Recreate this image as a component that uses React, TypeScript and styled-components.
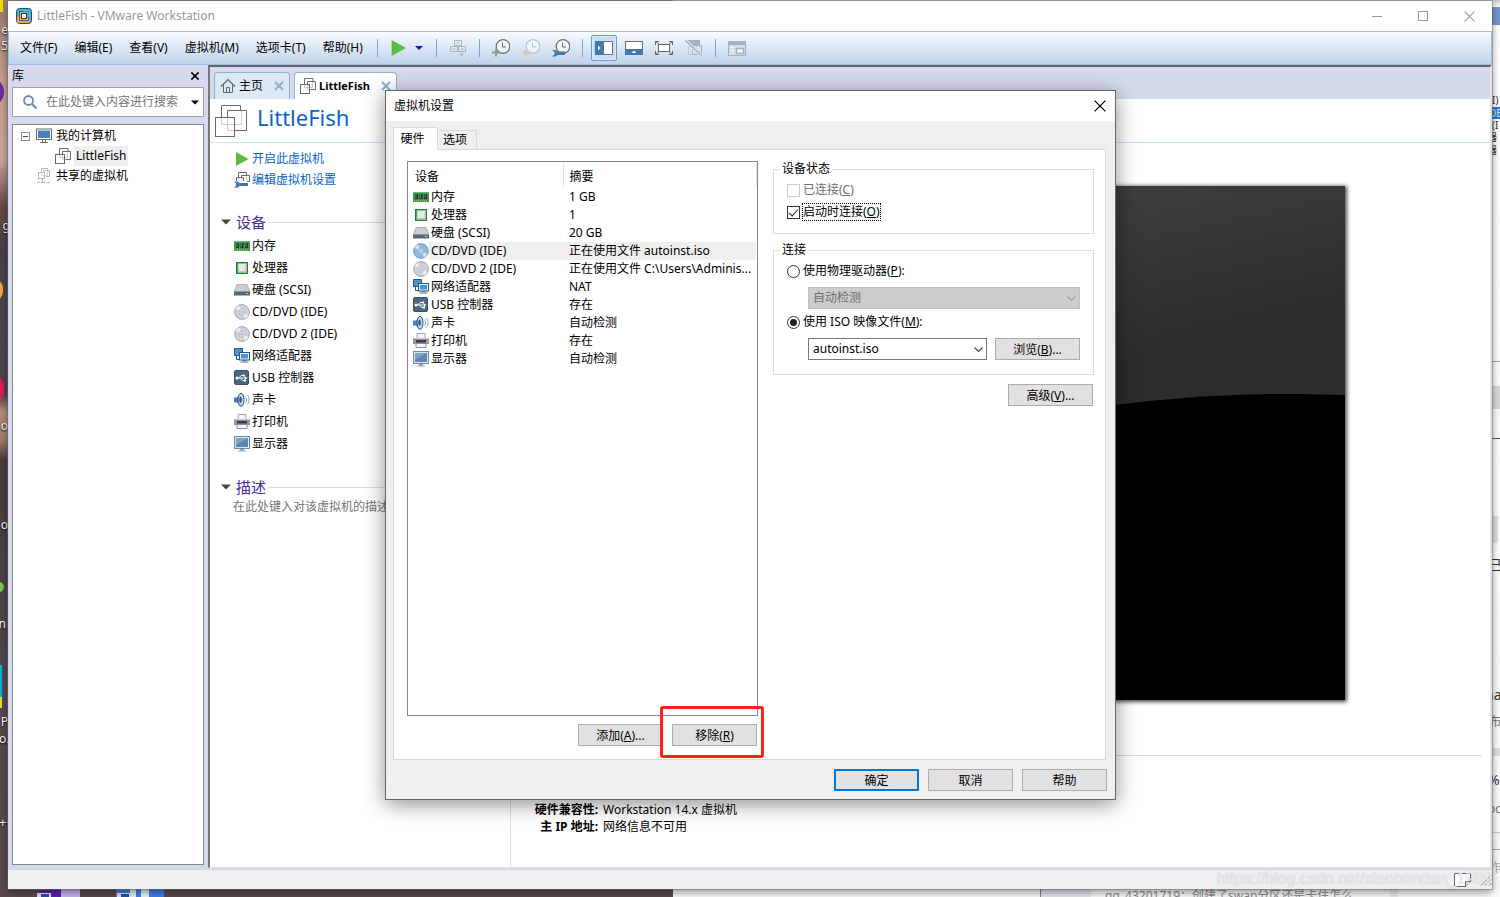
import React from "react";
import styled, { createGlobalStyle, css } from "styled-components";

const GlobalStyle = createGlobalStyle`
  *, *::before, *::after { box-sizing: border-box; }
  html, body { margin: 0; padding: 0; }
  body, button, input, select, textarea {
    font-family: "Noto Sans", "Noto Sans CJK SC", sans-serif;
    font-size: 12px;
    line-height: 16px;
    color: #000;
  }
  svg { display: block; flex: none; }
  h1, h2, ul, dl, dd, dt { margin: 0; padding: 0; font-weight: normal; }
  ul { list-style: none; }
  button { background: none; border: 0; padding: 0; white-space: nowrap; }
`;

/* ---------- desktop behind the windows ---------- */

const Desktop = styled.div`
  position: relative;
  display: flex;
  min-height: 100vh;
  padding: 1px 8px 8px;
  overflow: hidden;
  background: #f1f2f4;
`;

const Wallpaper = styled.div`
  position: absolute;
  left: 0;
  top: 0;
  bottom: 0;
  width: 673px;
  background: linear-gradient(180deg, #9c7a70 0, #c79c8c 80px, #c9a79c 160px, #6a4a45 205px, #4a3f48 250px, #4c454e 330px, #50424a 395px, #b98d78 412px, #a07c6a 440px, #493a3a 460px, #4b4148 560px, #564a4e 720px, #5b4a4c 100%);
`;

const BrowserEdge = styled.div`
  position: absolute;
  left: 673px;
  right: 0;
  top: 0;
  bottom: 0;
  background: linear-gradient(180deg, #c9c9c9 0, #fff 7px, #fafafa 100%);
`;

const Patch = styled.span<{ $x: number; $y: number; $w: number; $h: number; $c: string; $r?: number }>`
  position: absolute;
  left: ${(p) => p.$x}px;
  top: ${(p) => p.$y}px;
  width: ${(p) => p.$w}px;
  height: ${(p) => p.$h}px;
  background: ${(p) => p.$c};
  border-radius: ${(p) => p.$r ?? 0}px;
`;

const LeftLabel = styled.span<{ $y: number; $under?: number }>`
  position: absolute;
  right: calc(100% - 8px - ${(p) => p.$under ?? 0}px);
  top: ${(p) => p.$y}px;
  color: #fff;
  text-shadow: 0 1px 2px #000;
  white-space: nowrap;
`;

const RightLabel = styled.span<{ $y: number; $c?: string; $size?: number; $under?: number }>`
  position: absolute;
  left: calc(100% - 8px - ${(p) => p.$under ?? 0}px);
  top: ${(p) => p.$y}px;
  font-size: ${(p) => p.$size ?? 12}px;
  line-height: ${(p) => (p.$size === 10 ? 12 : 16)}px;
  color: ${(p) => p.$c ?? "#333"};
  white-space: nowrap;
`;

const Comment = styled.span`
  position: absolute;
  left: 1105px;
  bottom: -7px;
  color: #888;
  white-space: nowrap;
`;

const Watermark = styled.span`
  position: absolute;
  right: 8px;
  bottom: 8px;
  font-family: "Liberation Sans", sans-serif;
  font-size: 16px;
  line-height: 20px;
  color: rgba(250, 250, 250, 0.8);
  text-shadow: 0 0 1px rgba(120, 120, 120, 0.55);
  pointer-events: none;
`;

/* ---------- main window ---------- */

const Window = styled.div`
  position: relative;
  flex: 1;
  display: flex;
  flex-direction: column;
  min-width: 0;
  background: #efefef;
  box-shadow: 0 0 0 1px rgba(110, 110, 110, 0.5), 0 3px 8px rgba(0, 0, 0, 0.45);
`;

const TitleBar = styled.header`
  display: flex;
  align-items: center;
  height: 30px;
  padding-left: 8px;
  background: #fff;
  color: #999;
`;

const TitleText = styled.span`
  flex: 1;
  margin-left: 5px;
`;

const CaptionButton = styled.button`
  display: flex;
  align-items: center;
  justify-content: center;
  width: 46px;
  height: 28px;
`;

const ToolBar = styled.nav`
  display: flex;
  align-items: center;
  height: 34px;
  padding-left: 3px;
  background: linear-gradient(180deg, #f8fbff, #bfd3ea);
  border: 1px solid #9dbde2;
`;

const Menus = styled.div`
  display: flex;
  gap: 1px;
`;

const MenuButton = styled.button`
  height: 24px;
  padding: 0 8px;
`;

const Separator = styled.span`
  width: 1px;
  height: 18px;
  margin: 0 6px;
  background: #7ea3cf;
`;

const ToolButton = styled.button<{ $narrow?: boolean }>`
  display: flex;
  align-items: center;
  justify-content: ${(p) => (p.$narrow ? "flex-start" : "center")};
  width: ${(p) => (p.$narrow ? 16 : 30)}px;
  height: 26px;
`;

const PressedFrame = styled.span`
  display: flex;
  align-items: center;
  justify-content: center;
  width: 26px;
  height: 26px;
  background: #c7dcf8;
  border: 1px solid #6e9ad2;
  border-radius: 2px;
  box-shadow: inset 0 0 0 1px #dfeafa;
`;

const Workspace = styled.div`
  flex: 1;
  display: flex;
  min-height: 0;
  background: #d5daed;
`;

const Sidebar = styled.aside`
  display: flex;
  flex-direction: column;
  width: 200px;
  flex: none;
  padding: 0 4px 4px;
`;

const SidebarHead = styled.div`
  display: flex;
  align-items: center;
  justify-content: space-between;
  height: 22px;
  padding-right: 5px;
`;

const SearchBox = styled.label`
  display: flex;
  align-items: center;
  height: 30px;
  padding: 0 4px 0 10px;
  background: #fff;
  border: 1px solid #a0a0a0;
`;

const SearchInput = styled.input`
  flex: 1;
  min-width: 0;
  margin-left: 9px;
  padding: 0;
  border: 0;
  outline: 0;
  &::placeholder { color: #757575; opacity: 1; }
`;

const Tree = styled.ul`
  flex: 1;
  margin-top: 7px;
  padding: 1px 8px;
  background: #fff;
  border: 1px solid #828790;
`;

const TreeItem = styled.li<{ $indent: number }>`
  display: flex;
  align-items: center;
  gap: 4px;
  height: 20px;
  padding-left: ${(p) => p.$indent}px;
`;

const TreeLabel = styled.button<{ $selected?: boolean }>`
  height: 20px;
  ${(p) => p.$selected && css`
    margin-left: -1px;
    padding: 0 2px;
    background: #efefef;
  `}
`;

const Expander = styled.span`
  display: flex;
  margin-right: 2px;
`;

const Main = styled.main`
  flex: 1;
  display: flex;
  flex-direction: column;
  min-width: 0;
  background: #fff;
  border: solid;
  border-width: 2px 2px 1px 2px;
  border-color: #666 #e3e3e3 #e3e3e3 #777;
  margin-bottom: 1px;
`;

const TabStrip = styled.div`
  display: flex;
  align-items: flex-end;
  gap: 4px;
  height: 32px;
  padding-left: 4px;
  background: #d5daed;
`;

const Tab = styled.div<{ $active?: boolean }>`
  display: flex;
  align-items: center;
  gap: 3px;
  height: 27px;
  padding: 0 5px;
  background: ${(p) => (p.$active ? "#fff" : "#dbe8f5")};
  border: 1px solid #8fafd0;
  border-bottom: 0;
  border-radius: 4px 4px 0 0;
`;

const TabLabel = styled.button<{ $bold?: boolean }>`
  margin-right: 8px;
  ${(p) => p.$bold && css`
    font-size: 11px;
    font-weight: 700;
  `}
`;

const VmHeader = styled.div`
  display: flex;
  align-items: center;
  gap: 10px;
  height: 44px;
  padding-left: 5px;
  border-bottom: 1px solid #cfe1f1;
`;

const VmName = styled.h1`
  padding-bottom: 8px;
  font-size: 22px;
  line-height: 30px;
  color: #0a64c8;
`;

const VmBody = styled.div`
  flex: 1;
  display: flex;
`;

const VmLeft = styled.div`
  width: 301px;
  flex: none;
  padding: 5px 9px 0 11px;
  border-right: 1px solid #cfe1f1;
`;

const CommandList = styled.ul`
  padding-left: 13px;
`;

const Command = styled.a`
  display: flex;
  align-items: center;
  gap: 2px;
  height: 21px;
  color: #0a64c8;
  text-decoration: none;
`;

const SectionHead = styled.h2`
  display: flex;
  align-items: center;
  margin-top: 20px;
  height: 24px;
  font-size: 15px;
  line-height: 24px;
  color: #4a2ea6;
  svg { margin-right: 5px; }
  &::after {
    content: "";
    flex: 1;
    height: 1px;
    margin-left: 2px;
    background: #dcdcdc;
  }
`;

const DeviceList = styled.ul`
  padding-top: 1px;
`;

const DeviceItem = styled.li`
  display: flex;
  align-items: center;
  height: 22px;
  padding-left: 13px;
  button { display: flex; align-items: center; gap: 2px; }
`;

const Note = styled.p`
  margin: 0;
  padding-left: 12px;
  color: #757575;
  white-space: nowrap;
`;

const VmRight = styled.div`
  flex: 1;
  min-width: 0;
  padding: 43px 8px 0;
`;

const Preview = styled.div`
  width: 688px;
  max-width: 100%;
  margin: 0 auto;
  background: #000;
  box-shadow: 1px 1px 4px 1px rgba(0, 0, 0, 0.7);
  svg { width: 100%; height: auto; }
`;

const Details = styled.dl`
  display: grid;
  grid-template-columns: 79px 1fr;
  column-gap: 5px;
  margin-top: 55px;
  padding-top: 45px;
  border-top: 1px solid #dcdcdc;
  line-height: 17px;
  dt { font-weight: 700; text-align: right; white-space: nowrap; }
`;

const StatusBar = styled.footer`
  display: flex;
  align-items: center;
  justify-content: flex-end;
  gap: 9px;
  height: 20px;
  background: #efefef;
  border-top: 1px solid #d8d8d8;
`;

/* ---------- settings dialog ---------- */

const Dialog = styled.section`
  position: absolute;
  left: 385px;
  top: 90px;
  width: 731px;
  padding: 0 8px 8px 7px;
  background: #efefef;
  border: 1px solid #666;
  box-shadow: 0 4px 20px rgba(0, 0, 0, 0.45);
`;

const DialogTitle = styled.header`
  display: flex;
  align-items: center;
  justify-content: space-between;
  height: 30px;
  margin: 0 -8px 0 -7px;
  padding: 0 9px 0 8px;
  background: #fff;
`;

const DialogTabs = styled.div`
  display: flex;
  align-items: flex-end;
  height: 29px;
  margin-bottom: -1px;
`;

const DialogTab = styled.button<{ $active?: boolean }>`
  position: relative;
  width: ${(p) => (p.$active ? 45 : 39)}px;
  height: ${(p) => (p.$active ? 23 : 20)}px;
  padding-right: ${(p) => (p.$active ? 6 : 4)}px;
  background: ${(p) => (p.$active ? "#fff" : "#efefef")};
  border: 1px solid #d9d9d9;
  border-left-width: ${(p) => (p.$active ? 1 : 0)}px;
  border-bottom-color: ${(p) => (p.$active ? "#fff" : "#d9d9d9")};
`;

const Pane = styled.div`
  display: flex;
  gap: 15px;
  margin-right: 1px;
  padding: 11px 11px 13px 13px;
  background: #fff;
  border: 1px solid #d9d9d9;
`;

const HardwareColumn = styled.div`
  width: 351px;
  flex: none;
`;

const HardwareBox = styled.div`
  min-height: 555px;
  border: 1px solid #828790;
  padding: 1px;
`;

const HardwareTable = styled.table`
  width: 100%;
  border-collapse: collapse;
  table-layout: fixed;
  th {
    height: 25px;
    padding: 2px 0 0 6px;
    font-weight: 400;
    text-align: left;
    border-right: 1px solid #e5e5e5;
  }
  td {
    height: 18px;
    padding: 0 2px 0 6px;
    line-height: 18px;
    white-space: nowrap;
    overflow: hidden;
    text-overflow: ellipsis;
  }
  td:first-child { padding: 0 0 0 4px; }
`;

const HardwareRow = styled.tr<{ $selected?: boolean }>`
  ${(p) => p.$selected && css`
    td { background: #efefef; }
    td:first-child { background: linear-gradient(90deg, #fff 20px, #efefef 20px); }
  `}
`;

const DeviceCell = styled.span`
  display: flex;
  align-items: center;
  gap: 2px;
`;

const ButtonRow = styled.div<{ $top: number; $inset?: boolean }>`
  display: flex;
  justify-content: flex-end;
  gap: 9px;
  margin-top: ${(p) => p.$top}px;
  padding-right: ${(p) => (p.$inset ? 1 : 0)}px;
`;

const PushButton = styled.button<{ $primary?: boolean }>`
  width: 85px;
  height: 22px;
  padding-top: 2px;
  background: #e1e1e1;
  border: ${(p) => (p.$primary ? "2px solid #0078d7" : "1px solid #adadad")};
`;

const Highlighted = styled.span`
  position: relative;
  display: flex;
  &::after {
    content: "";
    position: absolute;
    inset: -18px -7px -12px -12px;
    border: 3px solid #ff2212;
    border-radius: 3px;
    pointer-events: none;
  }
`;

const SettingsColumn = styled.div`
  flex: 1;
  min-width: 0;
`;

const Group = styled.fieldset<{ $gap?: number; $bottom: number }>`
  min-width: 0;
  margin: ${(p) => p.$gap ?? 0}px 0 0;
  padding: 2px 13px ${(p) => p.$bottom}px;
  border: 1px solid #dcdcdc;
  legend { margin-left: -7px; padding: 0 2px; line-height: 16px; }
`;

const Option = styled.label<{ $disabled?: boolean }>`
  display: flex;
  align-items: center;
  gap: 3px;
  height: 22px;
  color: ${(p) => (p.$disabled ? "#6d6d6d" : "#000")};
`;

const Check = styled.input`
  appearance: none;
  position: relative;
  flex: none;
  width: 13px;
  height: 13px;
  margin: 0;
  background: #fff;
  border: 1px solid #333;
  &:disabled { border-color: #ccc; }
  &:checked::before {
    content: "";
    position: absolute;
    left: 3px;
    top: 0;
    width: 5px;
    height: 9px;
    border: solid #222;
    border-width: 0 1px 1px 0;
    transform: rotate(42deg);
  }
`;

const Radio = styled.input`
  appearance: none;
  display: flex;
  align-items: center;
  justify-content: center;
  flex: none;
  width: 13px;
  height: 13px;
  margin: 0;
  background: #fff;
  border: 1px solid #333;
  border-radius: 50%;
  &:checked::before {
    content: "";
    width: 7px;
    height: 7px;
    border-radius: 50%;
    background: #222;
  }
`;

const FocusText = styled.span`
  outline: 1px dotted #000;
`;

const FieldRow = styled.div`
  display: flex;
  align-items: center;
  gap: 8px;
  margin: 5px 0 2px;
  padding-left: 21px;
`;

const SelectWrap = styled.span`
  position: relative;
  display: flex;
  flex: 1;
  svg { position: absolute; right: 4px; top: 9px; pointer-events: none; }
`;

const Select = styled.select`
  appearance: none;
  width: 100%;
  height: 22px;
  padding: 0 16px 0 4px;
  background: #fff;
  border: 1px solid #7a7a7a;
  border-radius: 0;
  &:disabled { background: #ccc; border-color: #bfbfbf; color: #6d6d6d; opacity: 1; }
`;

/* ---------- icons ---------- */

const S = ({ w = 16, h = 16, vb, children }: { w?: number; h?: number; vb?: string; children: React.ReactNode }) => (
  <svg width={w} height={h} viewBox={vb ?? `0 0 ${w} ${h}`} fill="none" aria-hidden="true">{children}</svg>
);

const LogoIcon = () => (
  <S>
    <rect x=".5" y=".5" width="15" height="15" rx="3" fill="#46b4d6" stroke="#1f4d5e" />
    <path d="M1 8v4.500A2.500 2.500 0 0 0 3.500 15h8a2.500 2.500 0 0 0 2.500-2.500V11H4.500V8z" fill="#f3a72e" />
    <path d="M3.500 12.500v-9h9v9z" fill="#f5b845" stroke="#1f4d5e" strokeWidth=".8" />
    <path d="M7 4h5v5" stroke="#46b4d6" strokeWidth="1.600" />
    <rect x="5.500" y="5.500" width="5" height="5" fill="#fff" stroke="#1c3f50" />
  </S>
);

const Play = ({ w = 14, h = 14 }: { w?: number; h?: number }) => (
  <S w={w} h={h} vb="0 0 14 14"><path d="M1 0l12.500 7L1 14z" fill="#5dbb3f" /></S>
);

const VmIconLarge = () => (
  <S w={32} h={32}>
    <path d="M12.500 5.500v20h7v-13M6.500 12.500v7h20v-14" stroke="#c2ccdf" />
    <path d="M6.500 12.500V.5h19v5M12.500 12.500v-7h19v20h-12" stroke="#6b6b6b" />
    <rect x=".5" y="12.500" width="19" height="19" stroke="#6b6b6b" />
  </S>
);

const VmIcon = () => (
  <S>
    <path d="M7.500 6v5.500h3M4.500 6v3.500h8v-6" stroke="#c2ccdf" />
    <path d="M4.500 6V.5h8.500V3M7.500 6V3.500h8v8h-5" stroke="#6b6b6b" />
    <rect x=".5" y="6.500" width="9" height="9" stroke="#6b6b6b" />
  </S>
);

const SharedVmIcon = () => (
  <S>
    <path d="M5.500 4V.5h6V2M7.500 4V2.500h6v6h-4" stroke="#b8b8b8" />
    <rect x="2.500" y="4.500" width="6" height="6" stroke="#b8b8b8" />
    <path d="M5.500 4.500v3h6v-5" stroke="#d4d8e0" />
    <path d="M6.500 11v3M1 14.500h3M5 14.500h4M11 14.500h3" stroke="#b8b8b8" />
  </S>
);

const ComputerIcon = () => (
  <S>
    <rect x=".5" y="1" width="15" height="10.500" fill="#4a7fb5" stroke="#6b6b6b" />
    <rect x="1.500" y="2" width="13" height="8.500" stroke="#fff" />
    <path d="M6.500 12v2M9.500 12v2M4 14.500h8" stroke="#6b6b6b" />
  </S>
);

const HomeIcon = () => (
  <S>
    <path d="M1 8.500L8 1.500l7 7" stroke="#666" strokeWidth="1.200" />
    <path d="M3.500 7v7.500h9V7M6.500 14V9.500h3V14" stroke="#666" />
  </S>
);

const TabClose = () => (
  <S w={10} h={10}><path d="M1 1l8 8M9 1L1 9" stroke="#8db0cf" strokeWidth="2" /></S>
);

const Cross = ({ size = 10, color = "#000", weight = 1 }: { size?: number; color?: string; weight?: number }) => (
  <S w={size} h={size} vb="0 0 10 10"><path d="M.5.5l9 9M9.500.5l-9 9" stroke={color} strokeWidth={weight} /></S>
);

const SettingsVmIcon = () => (
  <S>
    <path d="M7.500 8V3.500h5v5M4.500 6v2" stroke="#c2ccdf" />
    <path d="M4.500 5V.5h8V3M7.500 5V3.500h8v6H13M2.500 9V5.500h7V9" stroke="#6b6b6b" />
    <path d="M0 9.500h4l1.500 1.500H14v3H5.500L4 15.500H0l2-2v-2.500z" fill="#4377b0" />
  </S>
);

const Clock = ({ tone = "#6b6b6b" }: { tone?: string }) => (
  <>
    <circle cx="11" cy="7.500" r="6.800" fill="#fff" fillOpacity=".5" stroke={tone} strokeWidth="1.200" />
    <path d="M10.500 3.500V8H14" stroke={tone} />
  </>
);

const SnapshotAdd = () => (
  <S w={18} h={18}><Clock /><path d="M4 9.500v8M0 13.500h8" stroke="#7fa68d" strokeWidth="2" /></S>
);
const SnapshotBack = () => (
  <S w={18} h={18}><Clock tone="#b9c1cc" /><path d="M0 14l4.500-4v2.500H9v3H4.500V18z" fill="#dcc6ae" /></S>
);
const SnapshotManage = () => (
  <S w={18} h={18}>
    <Clock />
    <path d="M0 11h4l1.500 1.500H13v3.500H5.500L4 17.500H0L2.500 15.500v-2.500z" fill="#4377b0" />
  </S>
);
const SendKeys = () => (
  <S w={18} h={18}>
    <path d="M5.500 1.500h7v5h-7zM1.500 7.500h7v5h-7zM9.500 7.500h7v5h-7zM3.500 10h3M11.500 10h3M7.500 4h3M12.500 12v5M10 14.500l2.500 2.500 2.500-2.500" stroke="#a9b4c3" />
  </S>
);
const LibraryView = () => (
  <S w={18} h={14}>
    <rect width="18" height="14" fill="#4377b0" />
    <path d="M8.500 .5h9v13h-9z" fill="#fff" stroke="#6b7480" />
    <path d="M3 4.500L5.500 7 3 9.500z" fill="#fff" />
  </S>
);
const ThumbView = () => (
  <S w={18} h={14}>
    <rect x=".5" y=".5" width="17" height="13" fill="#fff" stroke="#6b6b6b" />
    <rect y="8" width="18" height="6" fill="#4377b0" />
    <path d="M6.500 12L9 9.500l2.500 2.500z" fill="#fff" />
  </S>
);
const FullScreen = () => (
  <S w={18} h={14}>
    <rect x="3.500" y="3.500" width="11" height="7" fill="#fff" stroke="#666" />
    <path d="M.5 4V.5H4M.5.5L4 3.500M14 .5h3.500V4M17.500.5L14 3.500M.5 10v3.500H4M.5 13.500L4 10.500M17.500 10v3.500H14M17.500 13.500L14 10.500" stroke="#666" />
  </S>
);
const Unity = () => (
  <S w={18} h={16}>
    <path d="M3 0h12v5H3z" fill="#a6b1bf" />
    <path d="M14.500 4v6H12" stroke="#a6b1bf" />
    <path d="M3.500 6.500h7v8h-7z" stroke="#c0c9d5" />
    <path d="M7.500 5.500h9v9h-9z" fill="#d3dfee" stroke="#a6b1bf" />
    <path d="M.5.5l16 15" stroke="#dbe6f3" strokeWidth="3.500" />
    <path d="M.5.5l16 15" stroke="#a6b1bf" strokeWidth="1.500" />
  </S>
);
const Console = () => (
  <S w={18} h={15}>
    <rect x=".5" y=".5" width="17" height="14" fill="#d6dee9" stroke="#a6b1bf" />
    <path d="M0 0h18v4H0z" fill="#a6b1bf" />
    <path d="M3 6.500h3M3 9.500h3" stroke="#fff" />
    <rect x="8.500" y="7.500" width="7" height="5" fill="#eef3fa" stroke="#a6b1bf" strokeWidth="1.500" />
  </S>
);

const Triangle = () => <S w={10} h={6}><path d="M0 .5h10L5 5.500z" fill="#444" /></S>;

const Chevron = ({ color }: { color: string }) => (
  <S w={9} h={6}><path d="M.5.5l4 4 4-4" stroke={color} strokeWidth="1.100" /></S>
);

const MemoryIcon = () => (
  <S>
    <path d="M0 3h16v10H0z" fill="#3c9a50" />
    <path d="M0 3h16v1H0z" fill="#63bd74" />
    <path d="M2 5h3v5H2zM6.500 5h3v5h-3zM11 5h3v5h-3z" fill="#26332a" />
    <path d="M3 5v4M7.500 5v4M12 5v4" stroke="#70796f" />
    <path d="M1 12h14" stroke="#d8c25a" strokeDasharray="1 1" />
  </S>
);
const CpuIcon = () => (
  <S>
    <rect x="2" y="2" width="12" height="12" fill="#23803c" />
    <rect x="4" y="3.500" width="8.500" height="9" fill="#e6eae4" stroke="#8fc49b" />
    <path d="M5 11.500h7v-7" stroke="#b9c0b8" />
  </S>
);
const DiskIcon = () => (
  <S>
    <path d="M3 2.500h10l3 7.500H0z" fill="#c9ced4" stroke="#8b929a" strokeWidth=".6" />
    <path d="M0 9.500h16v4H0z" fill="#5d6770" />
    <path d="M0 9.500h16" stroke="#8b949c" />
    <path d="M12 11.500h2" stroke="#a6e08a" />
  </S>
);
const DiscIcon = ({ selected }: { selected?: boolean }) => (
  <S>
    <circle cx="8" cy="8" r="7.400" fill={selected ? "#8db9e2" : "#cdd2d9"} stroke={selected ? "#5d8fc2" : "#9298a3"} strokeWidth=".8" />
    <path d="M8 8L1.500 5A7 7 0 0 1 5 1.600zM8 8l6.500 3a7 7 0 0 1-3.500 3.400z" fill="#fff" opacity=".65" />
    <circle cx="8" cy="8" r="3" fill={selected ? "#c4dcf2" : "#e6e9ee"} stroke={selected ? "#6b9bcc" : "#a5abb6"} strokeWidth=".6" />
    <circle cx="8" cy="8" r="1.200" fill="#fff" stroke="#777f8c" strokeWidth=".6" />
  </S>
);
const NetworkIcon = () => (
  <S>
    <path d="M.5 .5h8v7h-8z" fill="#4c93cf" stroke="#2a5580" />
    <path d="M2.500 7.500v4h3" stroke="#2a5580" />
    <rect x="5.500" y="4.500" width="10" height="7.500" fill="#e8f1f9" stroke="#2a5580" />
    <rect x="7" y="6" width="7" height="4.500" fill="#3d97e0" />
    <path d="M8.500 12.500h4M6.500 14h8" stroke="#5b6f83" />
  </S>
);
const UsbIcon = () => (
  <S>
    <rect x=".5" y=".5" width="14" height="14" rx="1.500" fill="#4b6681" stroke="#37506a" />
    <path d="M2.500 8H12M5 8l2-2.500h2M6.500 8l2 2.500h2" stroke="#fff" />
    <circle cx="3" cy="8" r="1.500" fill="#fff" />
    <path d="M11 6.500L13.500 8 11 9.500zM9 4.500h2v2H9zM10 9.500h2v2h-2z" fill="#fff" />
  </S>
);
const SoundIcon = () => (
  <S>
    <path d="M0 5.500h3L7.500 1v13.500L3 10.500H0z" fill="#4b7db0" />
    <ellipse cx="7" cy="7.800" rx="3" ry="6.500" fill="#b9d2ea" stroke="#2d5684" />
    <ellipse cx="6.500" cy="7.800" rx="1.300" ry="3" fill="#2d5684" />
    <path d="M11.500 4.500c1.500 2 1.500 4.500 0 6.500M13.500 3c2 3 2 6.500 0 9.500" stroke="#8aa8c6" />
  </S>
);
const PrinterIcon = () => (
  <S>
    <path d="M4 .5h8V6H4z" fill="#f4f5fa" stroke="#a0a3b5" />
    <path d="M0 5.500h16V11H0z" fill="#9494aa" />
    <path d="M3 7h10v2.500H3z" fill="#3b3b49" />
    <path d="M0 5.500h16" stroke="#c4c4d4" />
    <path d="M14 8.500h1" stroke="#7ee06a" />
    <path d="M3 10.500h10v4H3z" fill="#f4f5fa" stroke="#8c8ca0" />
  </S>
);
const DisplayIcon = () => (
  <S>
    <rect x=".5" y=".5" width="15" height="12" fill="#dde6ef" stroke="#7488a0" />
    <rect x="2" y="2" width="12" height="9" fill="#5d86b2" />
    <path d="M2 2h12L2 9z" fill="#7ea2c8" />
    <path d="M6 13h4v1.500H6z" fill="#8a9bb0" />
    <path d="M4 15h8" stroke="#8a9bb0" />
  </S>
);

/* ---------- data ---------- */

interface Device {
  name: string;
  summary: string;
  icon: React.ReactNode;
  selected?: boolean;
}

const devices: Device[] = [
  { name: "内存", summary: "1 GB", icon: <MemoryIcon /> },
  { name: "处理器", summary: "1", icon: <CpuIcon /> },
  { name: "硬盘 (SCSI)", summary: "20 GB", icon: <DiskIcon /> },
  { name: "CD/DVD (IDE)", summary: "正在使用文件 autoinst.iso", icon: <DiscIcon />, selected: true },
  { name: "CD/DVD 2 (IDE)", summary: "正在使用文件 C:\\Users\\Adminis...", icon: <DiscIcon /> },
  { name: "网络适配器", summary: "NAT", icon: <NetworkIcon /> },
  { name: "USB 控制器", summary: "存在", icon: <UsbIcon /> },
  { name: "声卡", summary: "自动检测", icon: <SoundIcon /> },
  { name: "打印机", summary: "存在", icon: <PrinterIcon /> },
  { name: "显示器", summary: "自动检测", icon: <DisplayIcon /> },
];

const menus = ["文件(F)", "编辑(E)", "查看(V)", "虚拟机(M)", "选项卡(T)", "帮助(H)"];

/* ---------- parts ---------- */

const Backdrop = () => (
  <>
    <Wallpaper aria-hidden="true">
      <Patch $x={-8} $y={0} $w={11} $h={12} $c="#e8e000" />
      <Patch $x={-34} $y={77} $w={38} $h={30} $c="#6a2c9a" $r={16} />
      <Patch $x={-18} $y={278} $w={21} $h={24} $c="#f6a63c" $r={12} />
      <Patch $x={-22} $y={374} $w={26} $h={30} $c="#dc1c5c" $r={14} />
      <Patch $x={-6} $y={582} $w={10} $h={10} $c="#78c850" $r={5} />
      <Patch $x={0} $y={665} $w={2} $h={32} $c="#00b4dc" />
      <Patch $x={0} $y={697} $w={2} $h={11} $c="#e6dc30" />
      <Patch $x={39} $y={889} $w={22} $h={8} $c="#5a22b4" />
      <Patch $x={61} $y={889} $w={19} $h={8} $c="#c4b4ec" />
      <Patch $x={116} $y={889} $w={48} $h={8} $c="#3f7fe8" />
      <Patch $x={130} $y={889} $w={6} $h={8} $c="#e8f0fa" />
      <Patch $x={141} $y={889} $w={8} $h={8} $c="#e8f0fa" />
      <Patch $x={37} $y={893} $w={14} $h={4} $c="#dfe4f4" />
      <Patch $x={41} $y={894} $w={8} $h={3} $c="#2a4f9a" />
      <Patch $x={117} $y={893} $w={14} $h={4} $c="#dfe4f4" />
      <Patch $x={121} $y={894} $w={8} $h={3} $c="#2a4f9a" />
    </Wallpaper>
    <BrowserEdge aria-hidden="true">
      <Patch $x={367} $y={889} $w={1} $h={8} $c="#888" />
      <Patch $x={368} $y={889} $w={50} $h={8} $c="#e4e7ea" />
      <Patch $x={717} $y={889} $w={8} $h={8} $c="#e9ebee" />
      <Patch $x={819} $y={7} $w={8} $h={18} $c="#6f98cc" />
      <Patch $x={819} $y={107} $w={8} $h={12} $c="#2f78c8" />
      <Patch $x={819} $y={361} $w={8} $h={1} $c="#aaa" />
      <Patch $x={819} $y={386} $w={8} $h={23} $c="#dadada" />
      <Patch $x={819} $y={438} $w={8} $h={1} $c="#555" />
      <Patch $x={819} $y={516} $w={6} $h={27} $c="#dfe1e4" />
      <Patch $x={819} $y={748} $w={8} $h={8} $c="#dfe1e4" />
      <Patch $x={819} $y={832} $w={8} $h={1} $c="#ccc" />
      <Patch $x={819} $y={849} $w={8} $h={1} $c="#aaa" />
    </BrowserEdge>
    <LeftLabel $y={22}>e</LeftLabel>
    <LeftLabel $y={38}>5</LeftLabel>
    <LeftLabel $y={218} $under={2}>g</LeftLabel>
    <LeftLabel $y={418}>o</LeftLabel>
    <LeftLabel $y={517}>o</LeftLabel>
    <LeftLabel $y={616} $under={-2}>n</LeftLabel>
    <LeftLabel $y={714}>P</LeftLabel>
    <LeftLabel $y={731} $under={8}>o...</LeftLabel>
    <LeftLabel $y={815} $under={5}>++</LeftLabel>
    <RightLabel $y={94} $size={10}>I)</RightLabel>
    <RightLabel $y={107} $size={10} $c="#cfeaff" $under={3}>DE</RightLabel>
    <RightLabel $y={119} $size={10}>(I</RightLabel>
    <RightLabel $y={131} $size={10} $under={5}>器</RightLabel>
    <RightLabel $y={144} $size={10} $under={5}>器</RightLabel>
    <RightLabel $y={557} $size={14} $under={4}>已</RightLabel>
    <RightLabel $y={687} $size={14} $under={7}>na</RightLabel>
    <RightLabel $y={714} $c="#777" $under={3}>布</RightLabel>
    <RightLabel $y={772} $size={14} $under={4}>%</RightLabel>
    <RightLabel $y={801} $c="#777" $under={4}>oc</RightLabel>
    <RightLabel $y={860} $c="#aaa" $under={3}>作</RightLabel>
    <Comment>qq_43201719：创建了swap分区还是卡住怎么</Comment>
  </>
);

const SettingsDialog = () => (
  <Dialog role="dialog" aria-label="虚拟机设置">
    <DialogTitle>
      <span>虚拟机设置</span>
      <button aria-label="关闭"><Cross size={12} weight={1} /></button>
    </DialogTitle>
    <DialogTabs role="tablist">
      <DialogTab role="tab" aria-selected="true" $active>硬件</DialogTab>
      <DialogTab role="tab" aria-selected="false">选项</DialogTab>
    </DialogTabs>
    <Pane>
      <HardwareColumn>
        <HardwareBox>
          <HardwareTable>
            <colgroup>
              <col width="154" />
              <col width="193" />
            </colgroup>
            <thead>
              <tr><th>设备</th><th>摘要</th></tr>
            </thead>
            <tbody>
              {devices.map((d) => (
                <HardwareRow key={d.name} $selected={d.selected}>
                  <td>
                    <DeviceCell>{d.selected ? <DiscIcon selected /> : d.icon}{d.name}</DeviceCell>
                  </td>
                  <td>{d.summary}</td>
                </HardwareRow>
              ))}
            </tbody>
          </HardwareTable>
        </HardwareBox>
        <ButtonRow $top={8} $inset>
          <PushButton>添加(<u>A</u>)...</PushButton>
          <Highlighted><PushButton>移除(<u>R</u>)</PushButton></Highlighted>
        </ButtonRow>
      </HardwareColumn>
      <SettingsColumn>
        <Group $bottom={10}>
          <legend>设备状态</legend>
          <Option $disabled><Check type="checkbox" disabled /><span>已连接(<u>C</u>)</span></Option>
          <Option><Check type="checkbox" defaultChecked /><FocusText>启动时连接(<u>O</u>)</FocusText></Option>
        </Group>
        <Group $gap={8} $bottom={12}>
          <legend>连接</legend>
          <Option><Radio type="radio" name="source" /><span>使用物理驱动器(<u>P</u>):</span></Option>
          <FieldRow>
            <SelectWrap>
              <Select disabled aria-label="物理驱动器"><option>自动检测</option></Select>
              <Chevron color="#a0a0a0" />
            </SelectWrap>
          </FieldRow>
          <Option><Radio type="radio" name="source" defaultChecked /><span>使用 ISO 映像文件(<u>M</u>):</span></Option>
          <FieldRow>
            <SelectWrap>
              <Select aria-label="ISO 映像文件"><option>autoinst.iso</option></Select>
              <Chevron color="#444" />
            </SelectWrap>
            <PushButton>浏览(<u>B</u>)...</PushButton>
          </FieldRow>
        </Group>
        <ButtonRow $top={9} $inset><PushButton>高级(<u>V</u>)...</PushButton></ButtonRow>
      </SettingsColumn>
    </Pane>
    <ButtonRow $top={9}>
      <PushButton $primary>确定</PushButton>
      <PushButton>取消</PushButton>
      <PushButton>帮助</PushButton>
    </ButtonRow>
  </Dialog>
);

export default function App() {
  return (
    <Desktop>
      <GlobalStyle />
      <Backdrop />
      <Window>
        <TitleBar>
          <LogoIcon />
          <TitleText>LittleFish - VMware Workstation</TitleText>
          <CaptionButton aria-label="最小化"><S w={10} h={10}><path d="M0 5.500h10" stroke="#999" /></S></CaptionButton>
          <CaptionButton aria-label="最大化"><S w={10} h={10}><rect x=".5" y=".5" width="9" height="9" stroke="#999" /></S></CaptionButton>
          <CaptionButton aria-label="关闭"><Cross size={11} color="#999" /></CaptionButton>
        </TitleBar>
        <ToolBar>
          <Menus>{menus.map((m) => <MenuButton key={m}>{m}</MenuButton>)}</Menus>
          <Separator />
          <ToolButton aria-label="开启"><Play w={17} h={16} /></ToolButton>
          <ToolButton $narrow aria-label="电源选项"><S w={10} h={6}><path d="M1 1h8L5 5z" fill="#0018c8" /></S></ToolButton>
          <Separator />
          <ToolButton aria-label="发送按键"><SendKeys /></ToolButton>
          <Separator />
          <ToolButton aria-label="拍摄快照"><SnapshotAdd /></ToolButton>
          <ToolButton aria-label="恢复快照"><SnapshotBack /></ToolButton>
          <ToolButton aria-label="管理快照"><SnapshotManage /></ToolButton>
          <Separator />
          <ToolButton aria-label="显示库"><PressedFrame><LibraryView /></PressedFrame></ToolButton>
          <ToolButton aria-label="缩略图栏"><ThumbView /></ToolButton>
          <ToolButton aria-label="全屏"><FullScreen /></ToolButton>
          <ToolButton aria-label="Unity"><Unity /></ToolButton>
          <Separator />
          <ToolButton aria-label="控制台视图"><Console /></ToolButton>
        </ToolBar>
        <Workspace>
          <Sidebar>
            <SidebarHead>
              <span>库</span>
              <button aria-label="关闭库"><Cross size={8} weight={2} /></button>
            </SidebarHead>
            <SearchBox>
              <S w={14} h={14}>
                <circle cx="5.500" cy="5.500" r="4.500" stroke="#7089b4" strokeWidth="1.800" />
                <path d="M9 9l4.500 4.500" stroke="#7089b4" strokeWidth="2.200" />
              </S>
              <SearchInput placeholder="在此处键入内容进行搜索" aria-label="搜索" />
              <S w={8} h={5}><path d="M0 .5h8L4 4.500z" fill="#000" /></S>
            </SearchBox>
            <Tree>
              <TreeItem $indent={0}>
                <Expander>
                  <S w={9} h={9}><rect x=".5" y=".5" width="8" height="8" fill="#fff" stroke="#919191" /><path d="M2 4.500h5" stroke="#2b4f9b" /></S>
                </Expander>
                <ComputerIcon />
                <TreeLabel>我的计算机</TreeLabel>
              </TreeItem>
              <TreeItem $indent={34}><VmIcon /><TreeLabel $selected>LittleFish</TreeLabel></TreeItem>
              <TreeItem $indent={15}><SharedVmIcon /><TreeLabel>共享的虚拟机</TreeLabel></TreeItem>
            </Tree>
          </Sidebar>
          <Main>
            <TabStrip>
              <Tab><HomeIcon /><TabLabel>主页</TabLabel><button aria-label="关闭主页"><TabClose /></button></Tab>
              <Tab $active><VmIcon /><TabLabel $bold>LittleFish</TabLabel><button aria-label="关闭 LittleFish"><TabClose /></button></Tab>
            </TabStrip>
            <VmHeader><VmIconLarge /><VmName>LittleFish</VmName></VmHeader>
            <VmBody>
              <VmLeft>
                <CommandList>
                  <li><Command href="#power"><Play w={16} />开启此虚拟机</Command></li>
                  <li><Command href="#edit"><SettingsVmIcon />编辑虚拟机设置</Command></li>
                </CommandList>
                <SectionHead><Triangle />设备</SectionHead>
                <DeviceList>
                  {devices.map((d) => (
                    <DeviceItem key={d.name}><button>{d.icon}{d.name}</button></DeviceItem>
                  ))}
                </DeviceList>
                <SectionHead><Triangle />描述</SectionHead>
                <Note>在此处键入对该虚拟机的描述。</Note>
              </VmLeft>
              <VmRight>
                <Preview>
                  <svg viewBox="0 0 688 514" aria-hidden="true">
                    <defs>
                      <linearGradient id="gloss" x1="0" y1="0" x2="0.3" y2="1">
                        <stop offset="0" stopColor="#484848" />
                        <stop offset="0.5" stopColor="#2c2c2c" />
                        <stop offset="1" stopColor="#2c2c2c" />
                      </linearGradient>
                    </defs>
                    <rect width="688" height="514" fill="url(#gloss)" />
                    <path d="M0 346Q330 206 640 208L688 209V514H0z" fill="#000" />
                  </svg>
                </Preview>
                <Details>
                  <dt>硬件兼容性:</dt><dd>Workstation 14.x 虚拟机</dd>
                  <dt>主 IP 地址:</dt><dd>网络信息不可用</dd>
                </Details>
              </VmRight>
            </VmBody>
          </Main>
        </Workspace>
        <StatusBar>
          <S w={17} h={14}>
            <path d="M.5.5h16v8l-5 5H.5z" fill="#fff" stroke="#666" />
            <path d="M16.500 8.500h-5v5" fill="#ddd" stroke="#666" />
          </S>
          <S w={12} h={12}><path d="M11.500 1L1 11.500M11.500 5L5 11.500M11.500 9L9 11.500" stroke="#888" /></S>
        </StatusBar>
      </Window>
      <SettingsDialog />
      <Watermark>https://blog.csdn.net/xiaobendan_1989</Watermark>
    </Desktop>
  );
}
